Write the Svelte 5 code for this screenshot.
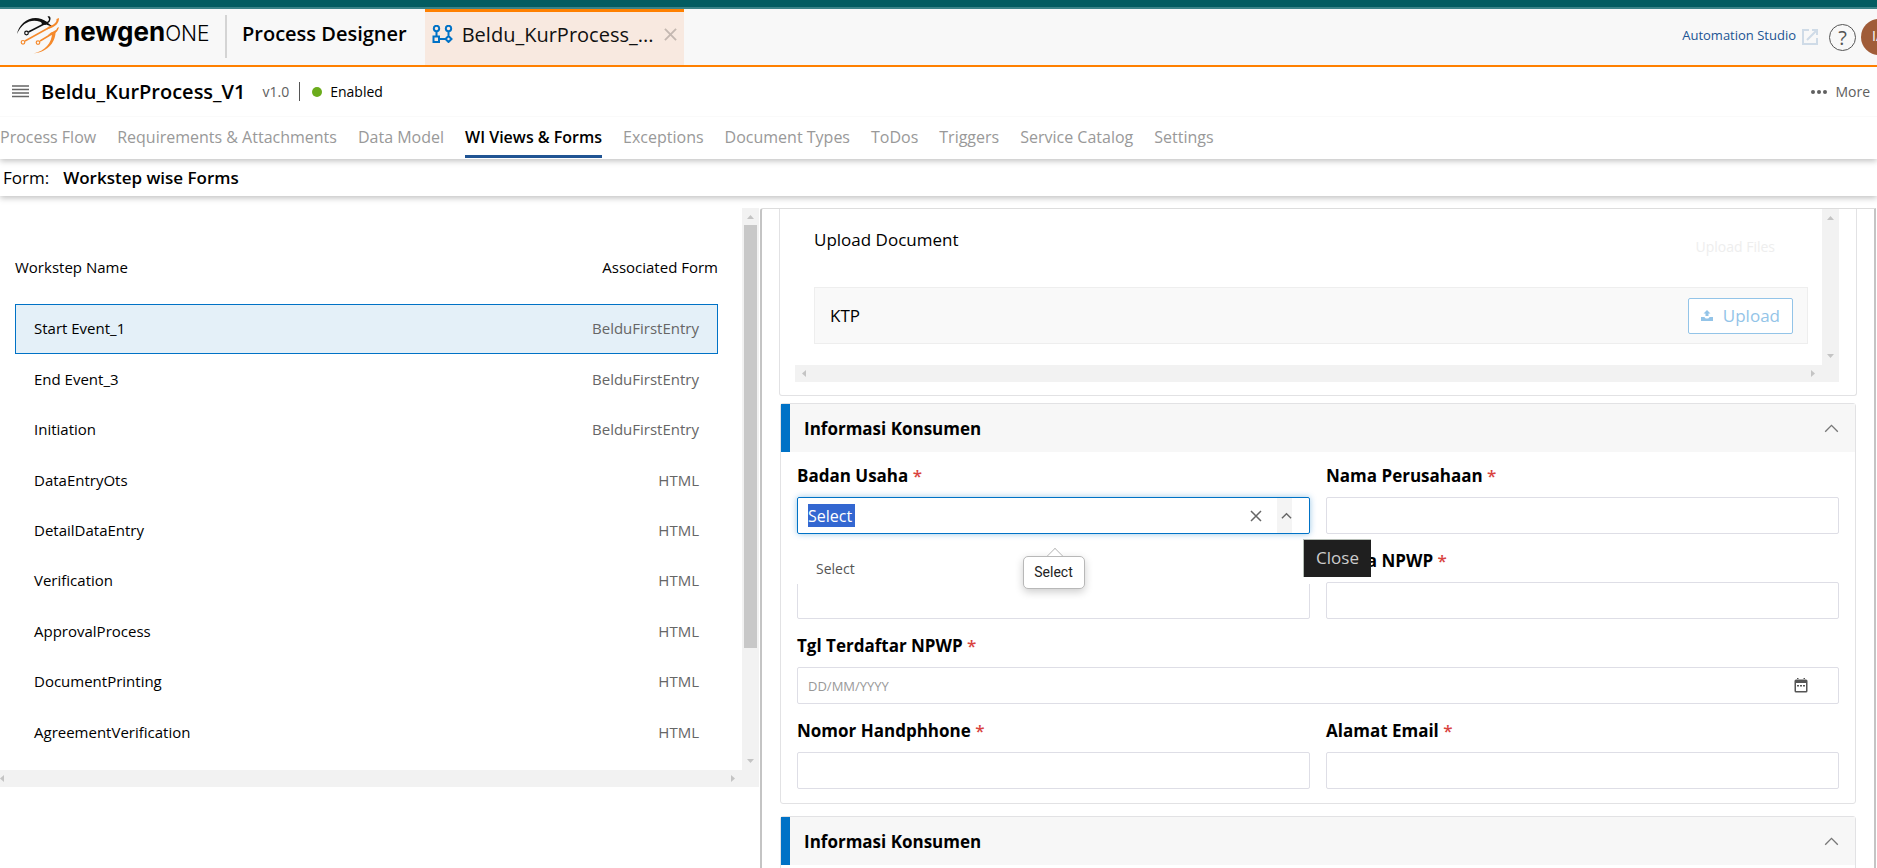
<script>
  const tabs = ['Process Flow', 'Requirements & Attachments', 'Data Model', 'WI Views & Forms', 'Exceptions', 'Document Types', 'ToDos', 'Triggers', 'Service Catalog', 'Settings'];
  const activeTab = 'WI Views & Forms';
  const steps = [
    ['Start Event_1', 'BelduFirstEntry'],
    ['End Event_3', 'BelduFirstEntry'],
    ['Initiation', 'BelduFirstEntry'],
    ['DataEntryOts', 'HTML'],
    ['DetailDataEntry', 'HTML'],
    ['Verification', 'HTML'],
    ['ApprovalProcess', 'HTML'],
    ['DocumentPrinting', 'HTML'],
    ['AgreementVerification', 'HTML']
  ];
</script>

{#snippet arrow(dir)}
  <svg class="arrow {dir}" viewBox="0 0 17 17" aria-hidden="true"><path d="M5 11 8.5 7 12 11z" /></svg>
{/snippet}

{#snippet chevron()}
  <svg class="chevron" viewBox="0 0 16 10" aria-hidden="true"><path d="M1 8.5 8 1.5l7 7" /></svg>
{/snippet}

<div class="page">
  <div class="strip"></div>
  <header class="appbar">
    <div class="logo">
      <svg class="mark" viewBox="0 0 44 40" aria-hidden="true">
        <g fill="#111">
          <path d="M1 19C3 7 18-3 31 7l-1.500 3C20 2 7 5 1 19z" />
          <path d="M25 4.500l6 2.500c2-1 3-3 .5-5.500 3-1 4 2 2 5.500L32 8l5 4-7-2.500-4 .5z" />
        </g>
        <path d="M12.500 17 30 8" fill="none" stroke="#111" stroke-width="1.500" />
        <circle cx="10.500" cy="18" r="1.800" fill="none" stroke="#111" stroke-width="1.200" />
        <g fill="#f58a2c">
          <path d="M43 3c0 5-3 8-8 10l-4 1.500 1-2.500c5-2 9-4 8.500-8z" />
          <path d="M43 12c-1 4-3 6-6 7l-5 1 3-2.500c3-1 6-2.500 6-4.500z" />
          <path d="M39.500 15c1 11-7 22-22 23.500C29 36 36 28 36 18z" />
        </g>
        <g fill="none" stroke="#f58a2c" stroke-width="1.500">
          <path d="M9 26 36 11M24 26l15-9" />
          <circle cx="7" cy="27.300" r="1.800" stroke-width="1.200" /><circle cx="22" cy="27.600" r="1.800" stroke-width="1.200" />
        </g>
      </svg>
      <span class="word"><b>newgen</b><span>ONE</span></span>
    </div>
    <h1>Process Designer</h1>
    <div class="doc-tab">
      <svg class="flow" viewBox="0 0 20 18" aria-hidden="true">
        <circle cx="4" cy="3.500" r="2.700" /><circle cx="16" cy="3.500" r="2.700" />
        <path d="M4 6.200v5M16 6.200v5M7 14h6M1 11.500h5.500V17H1zM16 11l3 3-3 3-3-3z" />
      </svg>
      <span>Beldu_KurProcess_...</span>
      <button class="plain close" aria-label="Close tab">
        <svg viewBox="0 0 14 14"><path d="M1 1l12 12M13 1 1 13" /></svg>
      </button>
    </div>
    <div class="tools">
      <a href="#studio"><span>Automation Studio</span>
        <svg class="open" viewBox="0 0 16 16" aria-hidden="true"><path d="M7 1H1v14h14V9M10 1h5v5M15 1 5 11" /></svg>
      </a>
      <button class="plain help" aria-label="Help">?</button>
      <span class="avatar">IA</span>
    </div>
  </header>

  <div class="title-row">
    <button class="plain" aria-label="Menu">
      <svg class="burger" viewBox="0 0 17 13"><path d="M0 1h17M0 4.500h17M0 8h17M0 11.500h17" /></svg>
    </button>
    <h2>Beldu_KurProcess_V1</h2>
    <span class="version">v1.0</span>
    <span class="status"><i></i>Enabled</span>
    <button class="plain more">
      <svg viewBox="0 0 16 4" aria-hidden="true"><circle cx="2" cy="2" r="2" /><circle cx="8" cy="2" r="2" /><circle cx="14" cy="2" r="2" /></svg>
      More
    </button>
  </div>

  <nav class="tabs">
    {#each tabs as tab}
      <a href="#tab" class:active={tab === activeTab}>{tab}</a>
    {/each}
  </nav>

  <div class="form-row"><span>Form:</span><strong>Workstep wise Forms</strong></div>

  <main>
    <section class="steps-pane">
      <div class="list">
        <table>
          <thead><tr><th>Workstep Name</th><th>Associated Form</th></tr></thead>
          <tbody>
            {#each steps as [name, form], i}
              <tr class:selected={i === 0}><td>{name}</td><td>{form}</td></tr>
            {/each}
          </tbody>
        </table>
        <div class="vbar">{@render arrow('up')}<div class="thumb"></div><div class="rest"></div>{@render arrow('down')}</div>
      </div>
      <div class="hbar">{@render arrow('left')}<div class="rest"></div>{@render arrow('right')}<span class="corner"></span></div>
    </section>

    <section class="form-pane">
      <div class="card upload">
        <div class="upload-view">
          <div class="upload-body">
            <div class="upload-head"><span>Upload Document</span><span class="ghost">Upload Files</span></div>
            <div class="upload-item">
              <span>KTP</span>
              <button class="upload-btn">
                <svg viewBox="0 0 12 11" aria-hidden="true"><path d="M0 7h3.500c.5 1 1 1.500 2.500 1.500S8 8 8.500 7H12v4H0zM6 0l3.500 3.500h-2V6h-3V3.500h-2z" /></svg>
                Upload
              </button>
            </div>
          </div>
          <div class="vbar">{@render arrow('up')}<div class="rest"></div>{@render arrow('down')}</div>
        </div>
        <div class="hbar">{@render arrow('left')}<div class="rest"></div>{@render arrow('right')}<span class="corner"></span></div>
      </div>

      <div class="card group">
        <div class="group-head"><h3>Informasi Konsumen</h3><button class="plain" aria-label="Collapse">{@render chevron()}</button></div>
        <div class="fields">
          <div class="field">
            <label for="badan">Badan Usaha <em>*</em></label>
            <div class="combo">
              <span class="typed"><input id="badan" value="Select" /></span>
              <button class="plain clear" aria-label="Clear"><svg viewBox="0 0 12 12"><path d="M1 1l10 10M11 1 1 11" /></svg></button>
              <button class="plain toggle" aria-label="Close"><svg viewBox="0 0 12 8"><path d="M1 6.500l5-5 5 5" /></svg></button>
              <div class="options">Select</div>
              <div class="bubble">Select</div>
              <div class="tip">Close</div>
            </div>
          </div>
          <div class="field">
            <label for="nama">Nama Perusahaan <em>*</em></label>
            <input class="box" id="nama" />
          </div>
          <div class="field"><input class="box" aria-label="NPWP" /></div>
          <div class="field">
            <label for="npwp">Nama NPWP <em>*</em></label>
            <input class="box" id="npwp" />
          </div>
          <div class="field wide">
            <label for="tgl">Tgl Terdaftar NPWP <em>*</em></label>
            <div class="box date">
              <input id="tgl" placeholder="DD/MM/YYYY" />
              <svg viewBox="0 0 14 15" aria-hidden="true"><path d="M2 1.500h10a1.500 1.500 0 0 1 1.500 1.500v10a1.500 1.500 0 0 1-1.500 1.500H2A1.500 1.500 0 0 1 .5 13V3A1.500 1.500 0 0 1 2 1.500zM2 5v8h10V5zM3 0h1.500v2H3zM9.500 0H11v2H9.500z" fill-rule="evenodd" /><path d="M3 7h2v1.500H3zM6 7h2v1.500H6zM9 7h2v1.500H9z" /></svg>
            </div>
          </div>
          <div class="field">
            <label for="hp">Nomor Handphhone <em>*</em></label>
            <input class="box" id="hp" />
          </div>
          <div class="field">
            <label for="email">Alamat Email <em>*</em></label>
            <input class="box" id="email" />
          </div>
        </div>
      </div>

      <div class="card group">
        <div class="group-head"><h3>Informasi Konsumen</h3><button class="plain" aria-label="Collapse">{@render chevron()}</button></div>
        <div class="fields"></div>
      </div>
    </section>
  </main>
</div>

<style>
  :global(body) { margin: 0; background: #fff; }
  .page, .page :global(*) { box-sizing: border-box; }
  .page {
    height: 100vh;
    display: flex;
    flex-direction: column;
    overflow: hidden;
    font-family: "Open Sans", sans-serif;
    font-size: 14px;
    color: #000;
  }
  h1, h2, h3 { margin: 0; font-weight: 600; }
  svg { display: block; flex: none; }
  input, button { font-family: inherit; }
  a { text-decoration: none; }
  .plain { border: 0; padding: 0; background: none; display: flex; align-items: center; }

  .strip { height: 9px; flex: none; background: #035c61; border-bottom: 2px solid #3b8388; }
  .appbar { height: 58px; flex: none; display: flex; background: #f8f8f8; border-bottom: 2px solid #ff8000; }
  .logo { display: flex; padding-left: 16px; width: 227px; flex: none; margin: 6px 0 7px; border-right: 2px solid #d4d4d4; }
  .mark { width: 44px; height: 40px; }
  .word { display: flex; align-items: baseline; padding-left: 4px; font-family: Inter, sans-serif; line-height: 34px; }
  .word b { font-size: 26px; font-weight: 700; }
  .word span { font-size: 21px; font-weight: 300; }
  h1 { font-size: 20px; line-height: 50px; padding: 0 18px 0 15px; white-space: nowrap; }
  .doc-tab { display: flex; align-items: center; gap: 9px; width: 259px; padding: 0 7px 9px; background: #f8e9e0; border-top: 3px solid #ff8000; font-size: 20px; color: #111; white-space: nowrap; }
  .flow { width: 21px; height: 18px; fill: none; stroke: #0072c6; stroke-width: 2; }
  .close { margin-left: auto; }
  .close svg { width: 13px; height: 13px; stroke: #c4b8b1; stroke-width: 2; }
  .tools { margin-left: auto; margin-right: -20px; display: flex; align-items: center; }
  .tools a { display: flex; gap: 6px; align-items: center; color: #205493; font-size: 13px; }
  .tools a span { padding-bottom: 4px; }
  .open { width: 16px; height: 16px; fill: none; stroke: #cfdbe7; stroke-width: 2; }
  .help { width: 27px; height: 27px; justify-content: center; margin: 0 5px 0 11px; border: 1px solid #555; border-radius: 50%; font-size: 20px; color: #555; }
  .avatar { width: 36px; height: 36px; padding-left: 11px; border-radius: 50%; background: #a05c38; color: #fff; line-height: 34px; }

  .title-row { height: 50px; flex: none; display: flex; align-items: center; padding: 0 7px 0 12px; border-bottom: 1px solid #fafafa; }
  .burger { width: 17px; height: 13px; stroke: #666; stroke-width: 1.3; }
  h2 { font-size: 20px; padding: 0 17px 0 12px; }
  .version { color: #606060; }
  .status { display: flex; align-items: center; gap: 8px; margin-left: 10px; padding-left: 12px; border-left: 1px solid #555; }
  .status i { width: 10px; height: 10px; border-radius: 50%; background: #6bac1c; }
  .more { margin-left: auto; gap: 8px; font-size: 14px; color: #606060; }
  .more svg { width: 16px; height: 4px; fill: #606060; }

  .tabs, .form-row { flex: none; display: flex; box-shadow: 0 2px 6px rgba(0, 0, 0, .25); clip-path: inset(0 0 -10px 0); }
  .tabs { height: 42px; gap: 21px; }
  .tabs a { height: 41px; line-height: 40px; font-size: 16px; color: #999; white-space: nowrap; }
  .tabs a.active { color: #000; font-weight: 600; border-bottom: 3px solid #205493; }
  .form-row { height: 37px; align-items: center; gap: 14px; padding-left: 3px; font-size: 17px; }
  .form-row strong { font-weight: 600; }

  main { flex: 1; min-height: 0; display: flex; margin-top: 12px; }
  .steps-pane { width: 760px; flex: none; }
  .list { display: flex; justify-content: space-between; height: 562px; padding-left: 15px; }
  table { width: 703px; border-collapse: collapse; height: 550px; font-size: 15px; }
  th { height: 96px; padding: 22px 0 0; text-align: left; font-weight: 500; vertical-align: middle; }
  th:last-child, td:last-child { text-align: right; }
  td { padding: 0 19px 2px; font-weight: 500; }
  td:last-child { color: #666; font-weight: 400; }
  .selected { outline: 1px solid #0072c6; outline-offset: -1px; background: #e4f0f8; }
  .vbar { width: 17px; flex: none; display: flex; flex-direction: column; background: #f2f2f2; }
  .thumb { height: 423px; margin: 0 2px; background: #c8c8c8; }
  .rest { flex: 1; }
  .hbar { display: flex; height: 17px; background: #f2f2f2; }
  .hbar .corner { width: 17px; }
  .steps-pane .hbar, .steps-pane .vbar { margin-right: 1px; }
  .steps-pane .arrow.left { margin-left: -7px; }
  .arrow { width: 17px; height: 17px; fill: #c4c4c4; }
  .arrow.down { transform: rotate(180deg); }
  .arrow.left { transform: rotate(-90deg); }
  .arrow.right { transform: rotate(90deg); }

  .form-pane { flex: 1; min-width: 0; overflow: hidden; padding: 0 17px; margin-right: 1px; border: 2px solid #c4c4c4; border-top: 1px solid #ddd; border-bottom: 0; border-radius: 3px 0 0 0; }
  .card { border: 1px solid #e2e2e4; border-radius: 3px; }
  .upload { border-top: 0; border-radius: 0 0 3px 3px; padding: 0 17px 13px 15px; margin-bottom: 7px; }
  .upload-view { display: flex; height: 156px; }
  .upload-body { flex: 1; padding: 0 14px 0 19px; }
  .upload-head { display: flex; justify-content: space-between; height: 78px; padding-right: 33px; font-size: 17px; line-height: 62px; }
  .ghost { font-size: 14px; line-height: 76px; color: #eee; }
  .upload-item { display: flex; justify-content: space-between; align-items: center; height: 57px; padding: 0 14px 0 15px; background: #f9f9f9; border: 1px solid #eee; font-size: 17px; }
  .upload-btn { display: flex; align-items: center; gap: 10px; height: 36px; padding: 0 12px; border: 1px solid #93c4e8; border-radius: 2px; background: #fff; color: #93c4e8; font-size: 17px; font-weight: 400; }
  .upload-btn svg { width: 12px; height: 11px; fill: #93c4e8; }

  .group { margin: 0 1px 12px; }
  .group-head { display: flex; justify-content: space-between; align-items: center; height: 48px; padding: 0 16px 0 14px; background: #f7f7f7; border-left: 9px solid #0072c6; }
  h3 { font-size: 17px; font-weight: 700; }
  .chevron { width: 15px; height: 9px; fill: none; stroke: #777; stroke-width: 1.5; }
  .fields { display: grid; grid-template-columns: 1fr 1fr; column-gap: 16px; padding: 0 16px 14px; }
  .field { display: flex; flex-direction: column; justify-content: flex-end; height: 85px; }
  .field:nth-child(-n + 2) { height: 82px; }
  .wide { grid-column: 1 / -1; }
  label { font-size: 17px; line-height: 24px; font-weight: 700; margin-bottom: 9px; }
  em { font-style: normal; font-weight: 600; color: #d9443f; }
  .box { height: 37px; width: 100%; border: 1px solid #dedee6; border-radius: 2px; background: #fff; outline: 0; }
  .date { display: flex; align-items: center; padding: 0 30px 0 10px; }
  .date input { flex: 1; border: 0; padding: 0; outline: 0; font-size: 13px; }
  .date input::placeholder { color: #999; }
  .date svg { width: 14px; height: 15px; fill: #555; }
  .combo { position: relative; display: flex; align-items: center; height: 37px; padding: 0 17px 0 10px; border: 1px solid #0072c6; border-radius: 2px; box-shadow: 0 0 6px rgba(0, 114, 198, .4); }
  .typed { flex: 1; }
  .typed input { width: 47px; height: 23px; padding: 0; border: 0; outline: 0; background: #3367d1; color: #fff; font-size: 16px; }
  .clear svg { width: 12px; height: 12px; stroke: #666; stroke-width: 1.5; }
  .toggle { align-self: stretch; width: 15px; margin-left: 15px; justify-content: flex-end; background: #f4f4f4; }
  .toggle svg { width: 11px; height: 8px; fill: none; stroke: #666; stroke-width: 1.5; }
  .options { position: absolute; z-index: 1; top: 44px; left: -1px; right: -1px; height: 42px; padding-left: 19px; line-height: 54px; background: #fff; color: #555; }
  .bubble { position: absolute; z-index: 2; top: 58px; left: 50%; transform: translateX(-50%); width: 62px; height: 33px; border: 1px solid #b8b8b8; border-radius: 5px; background: #fff; box-shadow: 0 3px 8px rgba(0, 0, 0, .2); font-family: Roboto, sans-serif; line-height: 30px; text-align: center; color: #222; }
  .bubble::before { content: ""; position: absolute; left: 25px; top: -7px; width: 11px; height: 11px; background: #fff; border: 1px solid #b8b8b8; border-right: 0; border-bottom: 0; transform: rotate(45deg); clip-path: polygon(0 0, 100% 0, 0 100%); }
  .tip { position: absolute; z-index: 3; top: 41px; right: -62px; width: 68px; height: 38px; border: 1px solid #b5bdb5; border-right: 0; border-bottom: 0; background: #1f1f1f; color: #ccc; font-size: 17px; line-height: 36px; text-align: center; }
</style>
